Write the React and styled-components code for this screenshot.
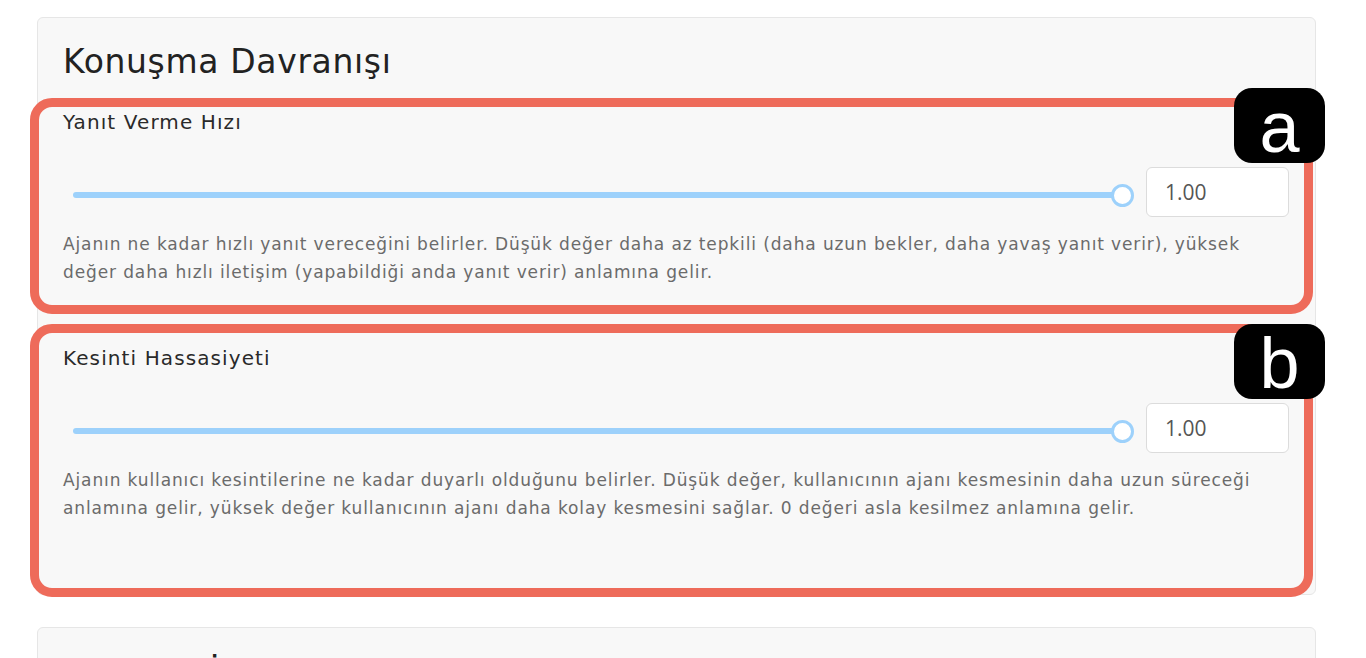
import React from "react";
import styled, { createGlobalStyle } from "styled-components";

const Global = createGlobalStyle`
  html, body { margin: 0; padding: 0; background: #ffffff; }
  body { font-family: "DejaVu Sans", "Noto Sans", sans-serif; overflow: hidden; }
  * { box-sizing: border-box; }
`;

const Page = styled.div`
  padding: 17px 50px 0 37px;
  display: flex;
  flex-direction: column;
  gap: 32px;
`;

const Card = styled.section`
  background: #f8f8f8;
  border: 1px solid #e6e6e6;
  border-radius: 6px;
  padding: ${(p) => p.$pt || 22}px 26px ${(p) => p.$pb || 72}px 25px;
`;

const Title = styled.h2`
  margin: 0 0 23px 0;
  font-size: 33px;
  line-height: 44px;
  font-weight: 400;
  letter-spacing: 0.65px;
  color: #222;
`;

const Settings = styled.div`
  display: flex;
  flex-direction: column;
  gap: 57px;
`;

const Setting = styled.div`
  position: relative;
  display: flex;
  flex-direction: column;
`;

const Label = styled.div`
  font-size: 20px;
  line-height: 30px;
  letter-spacing: 1.1px;
  color: #2a2a2a;
  margin-bottom: 30px;
`;

const Row = styled.div`
  display: flex;
  align-items: center;
  gap: 12px;
  height: 50px;
`;

const Slider = styled.div`
  flex: 1;
  position: relative;
  display: flex;
  align-items: center;
  height: 24px;
  margin-left: 10px;
  margin-top: 6px;
`;

const Track = styled.div`
  flex: 1;
  height: 6px;
  border-radius: 3px;
  background: #9dd1fb;
`;

const Thumb = styled.div`
  width: 23px;
  height: 23px;
  margin-left: -11px;
  border-radius: 50%;
  background: #ffffff;
  border: 3.5px solid #9dd1fb;
  flex: none;
`;

const NumberBox = styled.div`
  width: 143px;
  height: 50px;
  flex: none;
  background: #ffffff;
  border: 1px solid #dcdcdc;
  border-radius: 6px;
  display: flex;
  align-items: center;
  padding-left: 18px;
  font-family: "Open Sans", sans-serif;
  font-size: 21px;
  color: #555;
`;

const Description = styled.p`
  margin: 13px 0 0 0;
  font-size: 17px;
  line-height: 28px;
  letter-spacing: 0.88px;
  color: #6b6b6b;
`;

const Frame = styled.div`
  position: absolute;
  left: -33px;
  right: -24px;
  top: ${(p) => p.$top}px;
  bottom: ${(p) => p.$bottom}px;
  border: 9px solid #ee6b5a;
  border-radius: 22px;
  pointer-events: none;
`;

const Badge = styled.div`
  position: absolute;
  top: -19px;
  right: -36px;
  width: 91px;
  height: 75px;
  border-radius: 18px;
  background: #000;
  color: #fff;
  font-family: "Liberation Sans", Arial, sans-serif;
  font-size: 72px;
  line-height: 75px;
  padding-top: 2px;
  text-align: center;
`;

const items = [
  {
    key: "a",
    label: "Yanıt Verme Hızı",
    value: "1.00",
    frame: { top: -9, bottom: -28 },
    text:
      "Ajanın ne kadar hızlı yanıt vereceğini belirler. Düşük değer daha az tepkili (daha uzun bekler, daha yavaş yanıt verir), yüksek değer daha hızlı iletişim (yapabildiği anda yanıt verir) anlamına gelir.",
  },
  {
    key: "b",
    label: "Kesinti Hassasiyeti",
    value: "1.00",
    frame: { top: -19, bottom: -75 },
    text:
      "Ajanın kullanıcı kesintilerine ne kadar duyarlı olduğunu belirler. Düşük değer, kullanıcının ajanı kesmesinin daha uzun süreceği anlamına gelir, yüksek değer kullanıcının ajanı daha kolay kesmesini sağlar. 0 değeri asla kesilmez anlamına gelir.",
  },
];

export default function App() {
  return (
    <>
      <Global />
      <Page>
        <Card>
          <Title>Konuşma Davranışı</Title>
          <Settings>
            {items.map((it) => (
              <Setting key={it.key}>
                <Label>{it.label}</Label>
                <Row>
                  <Slider>
                    <Track />
                    <Thumb />
                  </Slider>
                  <NumberBox>{it.value}</NumberBox>
                </Row>
                <Description>{it.text}</Description>
                <Frame $top={it.frame.top} $bottom={it.frame.bottom} />
                <Badge>{it.key}</Badge>
              </Setting>
            ))}
          </Settings>
        </Card>
        <Card $pt={24} $pb={20}>
          <Title>Araçlar (İsteğe bağlı)</Title>
        </Card>
      </Page>
    </>
  );
}
